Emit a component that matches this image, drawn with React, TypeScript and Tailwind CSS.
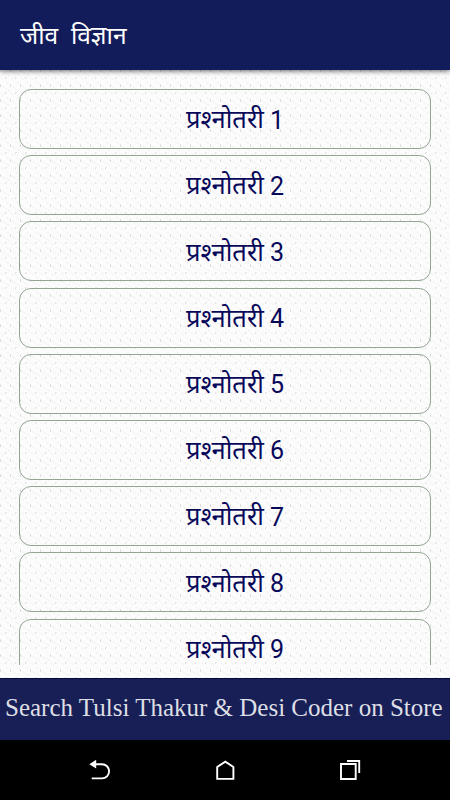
const quizzes = [1, 2, 3, 4, 5, 6, 7, 8, 9]

function Backdrop() {
  return (
    <svg className="absolute inset-0 w-full h-full" aria-hidden="true">
      <defs>
        <pattern id="weave" width="10" height="15" patternUnits="userSpaceOnUse">
          <rect width="10" height="15" fill="#fcfcfc" />
          <path d="M2 1l4 3M7 4l3 2M1 8l3 2M6 12l3 2" stroke="#f5f5f6" strokeWidth="1.5" />
          <rect x="0" y="14" width="1" height="1" fill="#e6e6e8" />
          <rect x="0" y="0" width="1" height="1" fill="#d3d3d5" />
          <rect x="0" y="1" width="1" height="1" fill="#e2e2e4" />
          <rect x="5" y="7" width="2" height="1" fill="#e9e9ea" />
          <rect x="5" y="8" width="1" height="1" fill="#dedee0" />
        </pattern>
      </defs>
      <rect width="100%" height="100%" fill="url(#weave)" />
    </svg>
  )
}

function Header() {
  return (
    <header className="relative z-10 h-[70px] shrink-0 bg-[#121c5b] px-5 flex items-center shadow-[0_1px_5px_rgba(0,0,0,0.6)]">
      <h1 className="pt-px text-[24.5px] leading-none text-white whitespace-pre">जीव  विज्ञान</h1>
    </header>
  )
}

function QuizButton({ n }: { n: number }) {
  return (
    <button className="h-[60px] shrink-0 w-full pl-5 rounded-[12px] border border-[#93a594] flex items-center justify-center text-[25.5px] leading-none text-[#08085a]">
      <span>प्रश्&zwj;नोतरी</span>
      <span className="ml-[6px] pt-0.5 text-[25px] font-[Roboto,sans-serif]">{n}</span>
    </button>
  )
}

function NavBar() {
  return (
    <nav className="h-[60px] shrink-0 bg-black flex items-center justify-center gap-[101px] text-white">
      <svg width="24" height="24" viewBox="0 0 24 24" fill="none" stroke="currentColor" strokeWidth="1.9">
        <path d="M7 6.200h7a7 7 0 0 1 0 14.200H3.700" />
        <path d="M1.300 6.200l6.900-4.400v8.800z" fill="currentColor" stroke="none" />
      </svg>
      <svg width="24" height="24" viewBox="0 0 24 24" fill="none" stroke="currentColor" strokeWidth="1.9">
        <path d="M4.200 20.900V9l8.100-5.400L20.400 9v11.900z" />
      </svg>
      <svg width="24" height="24" viewBox="0 0 24 24" fill="none" stroke="currentColor" strokeWidth="1.9">
        <path d="M3 6h14.700v15H3zM9 3h12.200v12" />
      </svg>
    </nav>
  )
}

export default function App() {
  return (
    <div className="w-full h-[800px] flex flex-col overflow-hidden font-['Noto_Sans',sans-serif]">
      <Header />
      <main className="relative flex-1 min-h-0 px-[19px] pt-[19px] pb-[13px]">
        <Backdrop />
        <div className="relative h-full flex flex-col gap-[6.2px] overflow-hidden">
          {quizzes.map(n => <QuizButton key={n} n={n} />)}
        </div>
      </main>
      <footer className="h-[62px] shrink-0 bg-[#181f57] border-t border-[#06093f] flex items-center px-[5px] pb-1 text-[#dedfe5]">
        <p className="font-['Liberation_Serif',serif] text-[25px] leading-none whitespace-nowrap">Search Tulsi Thakur &amp; Desi Coder on Store</p>
      </footer>
      <NavBar />
    </div>
  )
}
